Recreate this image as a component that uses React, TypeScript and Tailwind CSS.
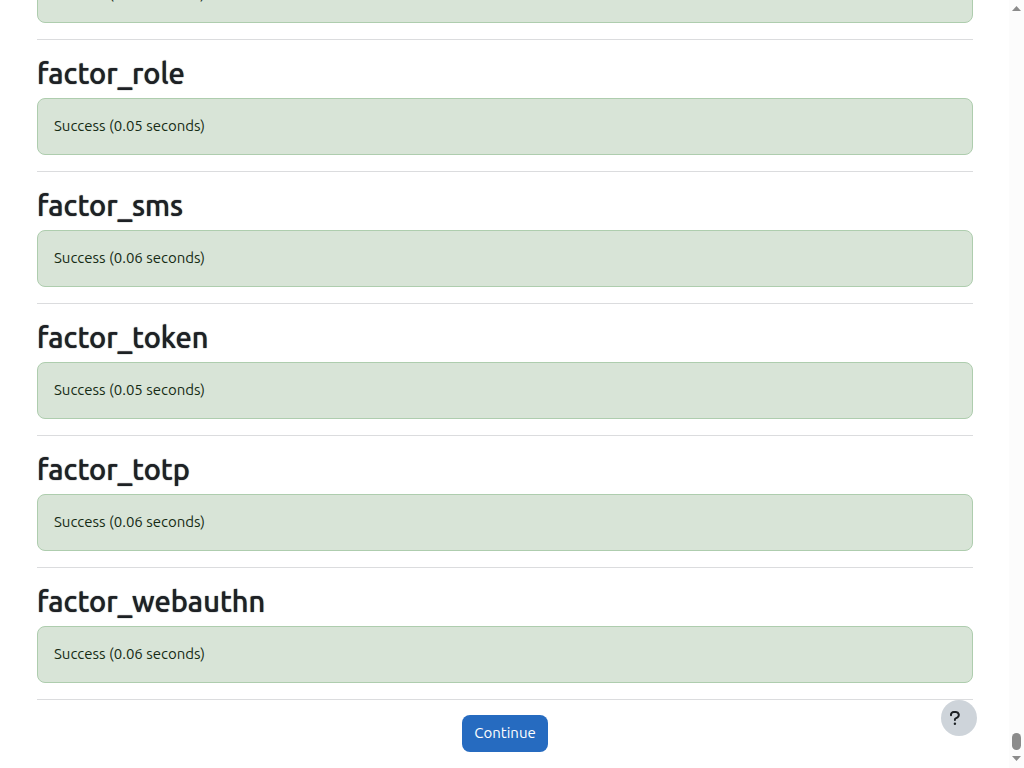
const results = [
  { name: "", seconds: "0.05" },
  { name: "factor_role", seconds: "0.05" },
  { name: "factor_sms", seconds: "0.06" },
  { name: "factor_token", seconds: "0.05" },
  { name: "factor_totp", seconds: "0.06" },
  { name: "factor_webauthn", seconds: "0.06" },
];

function Result({ name, seconds }: { name: string; seconds: string }) {
  return (
    <section className="border-b border-[#dbdcde] pt-4 pb-4">
      {name && (
        <h2 className="mb-2 text-[29px] leading-[34px] font-medium [text-shadow:0_0_1px_#1d2125]">{name}</h2>
      )}
      <div className="rounded-lg border border-[#aecdae] bg-[#d8e4d7] px-4 pt-4 pb-[18px] text-[15px] leading-[21px] text-[#152b14]">
        Success ({seconds} seconds)
      </div>
    </section>
  );
}

function ScrollTrack() {
  return (
    <div aria-hidden="true" className="flex w-[15px] shrink-0 flex-col items-center justify-between bg-[#fcfcfc] pt-1.5 pb-[7px]">
      <svg className="h-[5px] w-[9px]" viewBox="0 0 9 5" fill="#8b8b8b">
        <path d="M4.500 0 9 5H0Z" />
      </svg>
      <div className="flex flex-col items-center gap-1.5">
        <div className="h-[17px] w-[9px] rounded-full bg-[#8b8b8b]" />
        <svg className="h-[5px] w-[9px]" viewBox="0 0 9 5" fill="#8b8b8b">
          <path d="M0 0H9L4.500 5Z" />
        </svg>
      </div>
    </div>
  );
}

export default function App() {
  return (
    <div className="flex h-screen bg-white font-['Ubuntu','Noto_Sans',sans-serif] text-[#1d2125]">
      <main className="flex min-w-0 flex-1 flex-col justify-end overflow-hidden pr-9 pb-4 pl-[37px]">
        {results.map((r) => (
          <Result key={r.name} {...r} />
        ))}
        <div className="flex justify-center pt-[15px]">
          <button type="button" className="rounded-lg bg-[#266bc0] px-3 pt-[7px] pb-[9px] text-[15px] leading-[21px] text-white">
            Continue
          </button>
        </div>
      </main>
      <ScrollTrack />
      <button
        type="button"
        aria-label="Show footer"
        className="fixed right-[47px] bottom-8 flex size-9 items-center rounded-full bg-[#ced4da] pl-[9px]"
      >
        <svg className="h-[14px] w-[10px]" viewBox="0 0 10 14" fill="none" stroke="#1d2125" strokeWidth="2" strokeLinecap="round" strokeLinejoin="round">
          <path d="M1 4.200V3.800A2.700 2.700 0 0 1 3.700 1H6A2.900 2.900 0 0 1 7.500 6.300L5.500 7.500Q4.900 7.900 4.900 8.700V9" />
          <circle cx="4.900" cy="12.700" r="1.200" fill="#1d2125" stroke="none" />
        </svg>
      </button>
    </div>
  );
}
